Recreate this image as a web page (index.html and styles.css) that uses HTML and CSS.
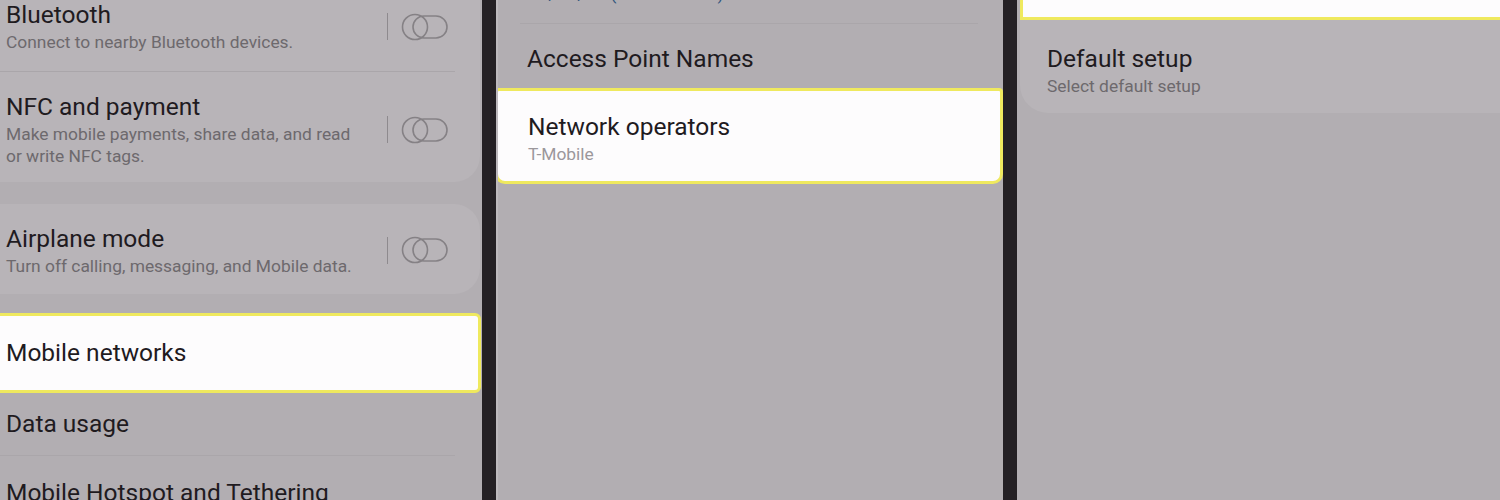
FILE: index.html
```html
<!DOCTYPE html>
<html>
<head>
<meta charset="utf-8">
<link rel="stylesheet" href="styles.css">
</head>
<body>
<div class="screen">
  <section class="panel p1">
    <div class="card card-top">
      <div class="row r-bt">
        <div class="txt">
          <div class="title">Bluetooth</div>
          <div class="sub">Connect to nearby Bluetooth devices.</div>
        </div>
        <div class="sw"><span class="sep"></span><svg class="tog" width="48" height="28" viewBox="0 0 48 28"><rect x="12" y="3" width="34" height="22" rx="11" fill="none" stroke="#858185" stroke-width="1.6"/><circle cx="14" cy="14" r="12.5" fill="none" stroke="#858185" stroke-width="1.6"/></svg></div>
      </div>
      <div class="divider"></div>
      <div class="row r-nfc">
        <div class="txt">
          <div class="title">NFC and payment</div>
          <div class="sub">Make mobile payments, share data, and read<br>or write NFC tags.</div>
        </div>
        <div class="sw"><span class="sep"></span><svg class="tog" width="48" height="28" viewBox="0 0 48 28"><rect x="12" y="3" width="34" height="22" rx="11" fill="none" stroke="#858185" stroke-width="1.6"/><circle cx="14" cy="14" r="12.5" fill="none" stroke="#858185" stroke-width="1.6"/></svg></div>
      </div>
    </div>
    <div class="card card-air">
      <div class="row r-air">
        <div class="txt">
          <div class="title">Airplane mode</div>
          <div class="sub">Turn off calling, messaging, and Mobile data.</div>
        </div>
        <div class="sw"><span class="sep"></span><svg class="tog" width="48" height="28" viewBox="0 0 48 28"><rect x="12" y="3" width="34" height="22" rx="11" fill="none" stroke="#858185" stroke-width="1.6"/><circle cx="14" cy="14" r="12.5" fill="none" stroke="#858185" stroke-width="1.6"/></svg></div>
      </div>
    </div>
    <div class="hl hl-mobile">
      <div class="title">Mobile networks</div>
    </div>
    <div class="plain">
      <div class="row r-data"><div class="title">Data usage</div></div>
      <div class="divider"></div>
      <div class="row r-hot"><div class="title">Mobile Hotspot and Tethering</div></div>
    </div>
  </section>
  <div class="bar"></div>
  <section class="panel p2">
    <div class="row r-mode"><div class="sub blue">2G/3G/4G (auto connect)</div></div>
    <div class="divider d2"></div>
    <div class="row r-apn"><div class="title">Access Point Names</div></div>
    <div class="hl hl-op">
      <div class="title">Network operators</div>
      <div class="sub light">T-Mobile</div>
    </div>
  </section>
  <div class="bar"></div>
  <section class="panel p3">
    <div class="hl hl-scan">
      <div class="sub light">Scan for all available networks.</div>
    </div>
    <div class="card card-def">
      <div class="title">Default setup</div>
      <div class="sub">Select default setup</div>
    </div>
  </section>
</div>
</body>
</html>
```

FILE: styles.css
```css
* { box-sizing: border-box; }
html, body { margin: 0; padding: 0; }
body {
  width: 1500px;
  height: 500px;
  overflow: hidden;
  background: #242024;
  font-family: Roboto, "Liberation Sans", sans-serif;
}
.screen {
  display: flex;
  width: 1500px;
  height: 500px;
}
.panel {
  background: #b2aeb2;
  overflow: hidden;
  height: 500px;
  display: flex;
  flex-direction: column;
}
.panel > * { flex-shrink: 0; }
.p1 { width: 482px; }
.bar { width: 14px; background: #242024; flex-shrink: 0; }
.p2 { width: 507px; border-left: 2px solid #bdb9bd; }
.p3 { flex: 1; }
.title {
  font-size: 24.5px;
  line-height: 30px;
  color: #1f1b1f;
  white-space: nowrap;
}
.sub {
  font-size: 17.4px;
  line-height: 21px;
  color: #6d696d;
  margin-top: 2px;
  white-space: nowrap;
}
.sub.blue { color: #31557d; margin-top: 0; }
.sub.light { color: #9b979b; }
.card {
  background: #b8b4b8;
}
.row {
  display: flex;
  align-items: center;
  justify-content: space-between;
}
.txt { display: flex; flex-direction: column; }
.sw {
  display: flex;
  align-items: center;
  gap: 13px;
  flex-shrink: 0;
}
.sep {
  width: 1px;
  height: 27px;
  background: #8e8a8e;
}
.tog { display: block; }
.divider {
  height: 1px;
  background: #aaa6aa;
}
/* panel 1 */
.card-top {
  margin: -17px 2px 0 -24px;
  padding-left: 30px;
  border-radius: 0 0 26px 26px;
}
.card-top .divider { margin-left: -30px; margin-right: 25px; }
.r-bt { padding: 17px 31px 18px 0; }
.r-nfc { padding: 20px 31px 15px 0; }
.r-nfc .sub { line-height: 21.5px; }
.card-air {
  margin: 22px 2px 0 -24px;
  padding-left: 30px;
  border-radius: 26px;
}
.r-air { padding: 19px 31px 17px 0; height: 90px; }
.hl {
  background: #fdfcfd;
  border: 3px solid #efe95e;
}
.hl-mobile {
  margin: 19px 1px 0 -10px;
  height: 80px;
  padding-left: 13px;
  display: flex;
  align-items: center;
  border-radius: 0 6px 6px 0;
}
.plain { padding-left: 6px; }
.plain .divider { margin-left: -6px; width: 455px; }
.r-data { height: 62px; }
.r-hot { padding-top: 22px; }
/* panel 2 */
.r-mode { padding-left: 29px; margin-top: -17px; height: 40px; align-items: flex-start; }
.r-mode .sub { line-height: 22px; }
.d2 { margin: 0 25px 0 22px; }
.r-apn { padding: 20px 0 0 29px; height: 64px; align-items: flex-start; }
.hl-op {
  margin-left: -3px;
  height: 96px;
  padding: 21px 0 0 30px;
  border-radius: 4px 4px 10px 10px;
}
/* panel 3 */
.hl-scan {
  margin: -30px 0 0 3px;
  height: 50px;
  padding: 10px 0 0 27px;
  border-top: none;
  border-right: none;
}
.card-def {
  margin-left: 3px;
  height: 93px;
  padding: 24px 0 0 27px;
  border-radius: 0 0 0 28px;
}
```
